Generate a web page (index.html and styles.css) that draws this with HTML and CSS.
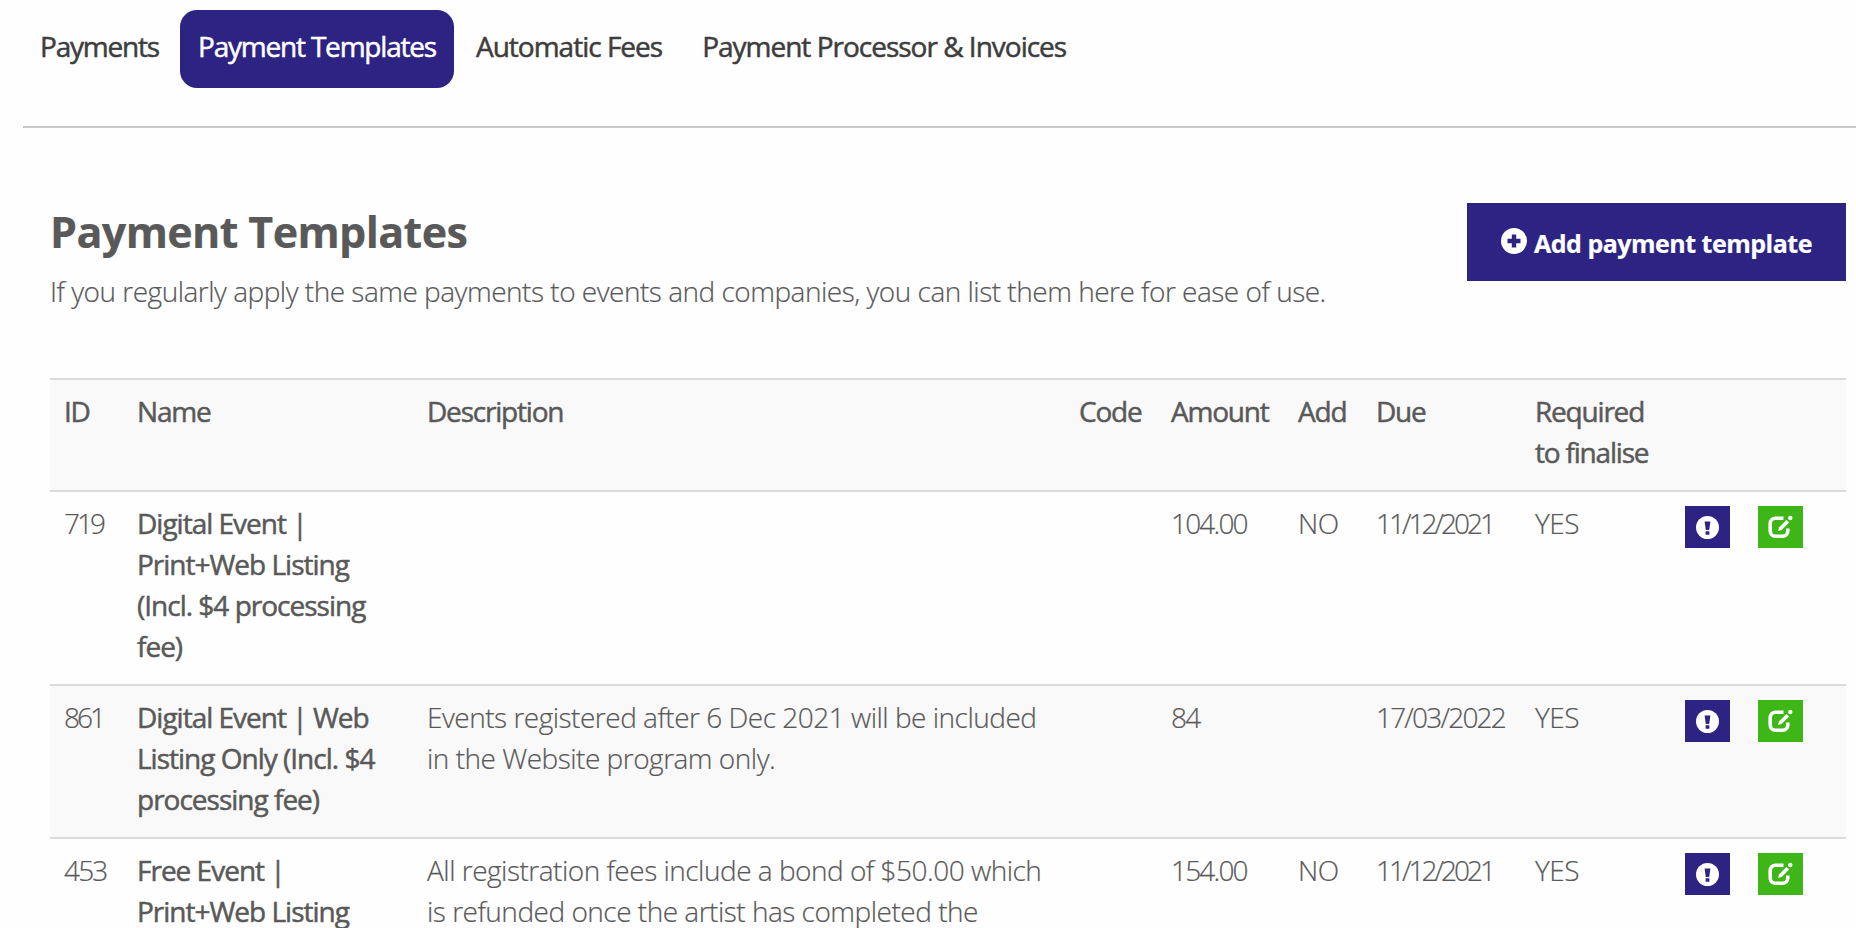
FILE: index.html
```html
<!DOCTYPE html>
<html lang="en">
<head>
    <meta charset="UTF-8">
    <meta name="viewport" content="width=device-width, initial-scale=1.0">
    <title>Payment Templates</title>
    <link rel="stylesheet" href="styles.css">
</head>
<body>
    <!-- icons shared by the buttons -->
    <svg class="sprite" width="0" height="0">
        <symbol id="plus" viewBox="0 0 26 26">
            <circle cx="13" cy="13" r="13" />
            <path class="cut" d="M10.8 6.5h4.4v4.3h4.3v4.4h-4.3v4.3h-4.4v-4.3H6.5v-4.4h4.3z" />
        </symbol>
        <symbol id="alert" viewBox="0 0 23 23">
            <circle cx="11.5" cy="11.5" r="11.5" />
            <path class="cut" d="M8.6 5.5h5.8l-1.2 8.4h-3.4zM9.6 15.2h3.8v3.6H9.6z" />
        </symbol>
        <symbol id="edit" viewBox="0 0 25 24">
            <path class="line" d="M15.5 3.2H7.5a5.3 5.3 0 0 0-5.3 5.3v7.5a5.3 5.3 0 0 0 5.3 5.3h7a5.3 5.3 0 0 0 5.3-5.3v-2.5" />
            <path d="M10 15.9l1.2-3.6 7.2-7.4 2.7 2.6-7.2 7.3z" />
            <circle cx="22.3" cy="3" r="2.2" />
        </symbol>
    </svg>

    <ul class="tabs">
        <li><a href="#">Payments</a></li>
        <li><a href="#" class="active">Payment Templates</a></li>
        <li><a href="#">Automatic Fees</a></li>
        <li><a href="#">Payment Processor &amp; Invoices</a></li>
    </ul>

    <div class="content">
        <div class="page-head">
            <div>
                <h1>Payment Templates</h1>
                <p>If you regularly apply the same payments to events and companies, you can list them here for ease of use.</p>
            </div>
            <a href="#" class="btn-add"><svg><use href="#plus" /></svg><span>Add payment template</span></a>
        </div>

        <table class="content-table">
            <colgroup>
                <col class="col-id">
                <col class="col-name">
                <col class="col-desc">
                <col class="col-code">
                <col class="col-amount">
                <col class="col-add">
                <col class="col-due">
                <col class="col-required">
                <col class="col-info">
                <col class="col-edit">
            </colgroup>
            <thead>
                <tr>
                    <th>ID</th>
                    <th>Name</th>
                    <th>Description</th>
                    <th>Code</th>
                    <th>Amount</th>
                    <th>Add</th>
                    <th>Due</th>
                    <th>Required<br>to finalise</th>
                    <th></th>
                    <th></th>
                </tr>
            </thead>
            <tbody>
                <tr>
                    <td class="num tight">719</td>
                    <td class="name">Digital Event |<br>Print+Web Listing<br>(Incl. $4 processing<br>fee)</td>
                    <td></td>
                    <td></td>
                    <td class="num">104.00</td>
                    <td>NO</td>
                    <td class="num tight">11/12/2021</td>
                    <td>YES</td>
                    <td><a href="#" class="btn-info"><svg><use href="#alert" /></svg></a></td>
                    <td><a href="#" class="btn-edit"><svg><use href="#edit" /></svg></a></td>
                </tr>
                <tr>
                    <td class="num tight">861</td>
                    <td class="name">Digital Event | Web<br>Listing Only (Incl. $4<br>processing fee)</td>
                    <td>Events registered after 6 Dec 2021 will be included<br>in the Website program only.</td>
                    <td></td>
                    <td class="num">84</td>
                    <td></td>
                    <td class="num">17/03/2022</td>
                    <td>YES</td>
                    <td><a href="#" class="btn-info"><svg><use href="#alert" /></svg></a></td>
                    <td><a href="#" class="btn-edit"><svg><use href="#edit" /></svg></a></td>
                </tr>
                <tr>
                    <td class="num">453</td>
                    <td class="name">Free Event |<br>Print+Web Listing</td>
                    <td>All registration fees include a bond of $50.00 which<br>is refunded once the artist has completed the</td>
                    <td></td>
                    <td class="num">154.00</td>
                    <td>NO</td>
                    <td class="num tight">11/12/2021</td>
                    <td>YES</td>
                    <td><a href="#" class="btn-info"><svg><use href="#alert" /></svg></a></td>
                    <td><a href="#" class="btn-edit"><svg><use href="#edit" /></svg></a></td>
                </tr>
            </tbody>
        </table>
    </div>
</body>
</html>
```
FILE: styles.css
```css
* {
    margin: 0;
    padding: 0;
    box-sizing: border-box;
}

body {
    height: 928px;
    overflow: hidden;
    background: #fefefe;
    color: #595959;
    font-family: "Open Sans", "Noto Sans", sans-serif;
    font-size: 28px;
    font-weight: 300;
    line-height: 41px;
    letter-spacing: -0.5px;
    -webkit-text-stroke: 0.2px;
}

a {
    color: inherit;
    text-decoration: none;
}

.sprite {
    position: absolute;
}

.tabs {
    display: flex;
    gap: 4px;
    height: 128px;
    margin-left: 23px;
    padding-top: 10px;
    border-bottom: 2px solid #c9c9c9;
    list-style: none;
    color: #3d3d3d;
    font-weight: 400;
    letter-spacing: -1px;
    white-space: nowrap;
    -webkit-text-stroke: 0.5px;
}

.tabs a {
    display: block;
    height: 78px;
    padding: 16px 18px 0;
    border-radius: 17px;
}

.tabs li:first-child,
.tabs li:nth-child(2) {
    letter-spacing: -1.2px;
}

.tabs li:first-child a {
    padding: 16px 17px 0;
}

.tabs .active {
    background: #2d2382;
    color: #fff;
}

.content {
    margin: 75px 10px 0 50px;
}

.page-head {
    display: flex;
    justify-content: space-between;
    align-items: flex-start;
    height: 175px;
    white-space: nowrap;
}

h1 {
    font-size: 43px;
    font-weight: 700;
    line-height: 58px;
    letter-spacing: -0.6px;
}

.page-head p {
    margin-top: 10px;
}

.btn-add {
    display: flex;
    align-items: center;
    gap: 7px;
    width: 379px;
    height: 78px;
    padding-left: 34px;
    background: #2d2382;
    color: #fff;
    font-size: 25px;
    font-weight: 700;
}

.btn-add svg {
    width: 26px;
    height: 26px;
    margin-top: -3px;
    fill: #fff;
}

.btn-add span {
    padding-top: 2px;
}

.cut {
    fill: #2d2382;
}

.line {
    fill: none;
    stroke: #fff;
    stroke-width: 3.6;
}

.content-table {
    width: 1796px;
    table-layout: fixed;
    border-collapse: separate;
    border-spacing: 0;
}

.col-id { width: 73px; }
.col-name { width: 290px; }
.col-desc { width: 652px; }
.col-code { width: 92px; }
.col-amount { width: 127px; }
.col-add { width: 78px; }
.col-due { width: 159px; }
.col-required { width: 150px; }
.col-info { width: 73px; }
.col-edit { width: 102px; }

.content-table th,
.content-table td {
    padding: 11px 0 17px 14px;
    border-top: 2px solid #dadada;
    text-align: left;
    vertical-align: top;
    white-space: nowrap;
}

.content-table th,
.content-table .name {
    font-weight: 400;
    letter-spacing: -1.2px;
    -webkit-text-stroke: 0.5px;
}

.content-table .name {
    letter-spacing: -1px;
}

.content-table .num {
    letter-spacing: -1.8px;
}

.content-table .tight {
    letter-spacing: -3px;
}

.content-table thead tr,
.content-table tbody tr:nth-of-type(even) {
    background-color: #f9f9f9;
}

.btn-info,
.btn-edit {
    display: flex;
    justify-content: center;
    align-items: center;
    width: 45px;
    height: 42px;
    margin-top: 3px;
    background: #2d2382;
}

.btn-edit {
    background: #3eb618;
}

.btn-info svg,
.btn-edit svg {
    width: 23px;
    height: 23px;
    fill: #fff;
}

.btn-edit svg {
    width: 25px;
    height: 24px;
}
```
